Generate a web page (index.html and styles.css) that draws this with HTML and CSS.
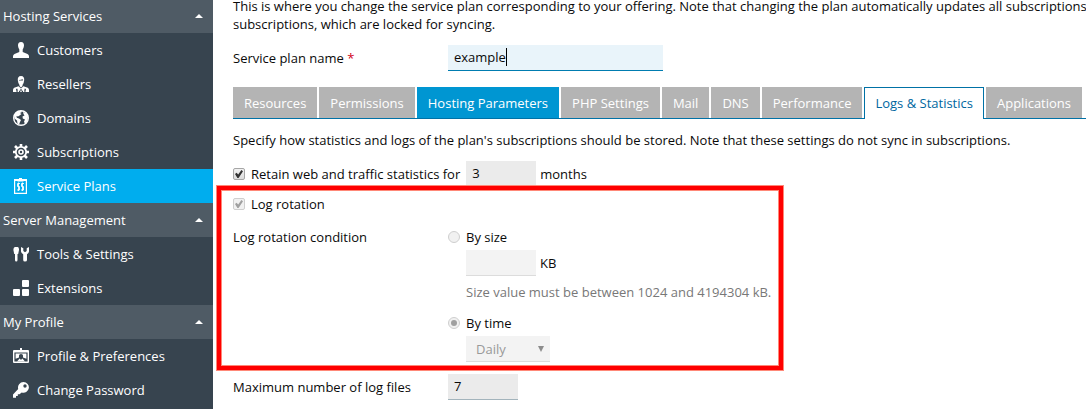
FILE: index.html
```html
<!DOCTYPE html>
<html lang="en">
<head>
    <meta charset="UTF-8">
    <meta name="viewport" content="width=device-width, initial-scale=1.0">
    <title>Service Plans</title>
    <link rel="stylesheet" href="styles.css">
</head>
<body>
    <nav class="sidebar">
        <button class="nav-header" type="button">Hosting Services</button>
        <a class="nav-item" href="#">
            <svg class="icon" viewBox="0 0 16 16"><path d="M8 0C5.800 0 4.900 1.600 5 3.600C5.100 5.600 5.900 6.900 6.300 7.500V10L1.500 12Q0 12.800 0 14.200V16H16V14.200Q16 12.800 14.500 12L9.700 10V7.500C10.100 6.900 10.900 5.600 11 3.600C11.100 1.600 10.200 0 8 0Z"/></svg>
            Customers
        </a>
        <a class="nav-item" href="#">
            <svg class="icon" viewBox="0 0 16 16"><path d="M8 0C5.500 0 4.600 1.700 4.800 4L5.400 7L6.500 9V10L8 11.500L9.500 10V9L10.600 7L11.200 4C11.400 1.700 10.500 0 8 0ZM6 4Q8.500 4 9.500 3L10 4.500H6Z" fill-rule="evenodd"/><path d="M5.600 10.300L1.200 11.800Q0 12.600 0 14V16H3.600L3 13L4.200 12.600L5 15H6.300L8 12.800L9.700 15H11L11.800 12.600L13 13L12.400 16H16V14Q16 12.600 14.800 11.800L10.400 10.300L8 12.600Z"/><path d="M4.600 14.500H6V16H4.600ZM10 14.500H11.400V16H10ZM7.300 14.500H8.700V16H7.300Z"/></svg>
            Resellers
        </a>
        <a class="nav-item" href="#">
            <svg class="icon" viewBox="0 0 16 16"><circle cx="8" cy="8" r="7.300" fill="none" stroke="currentColor" stroke-width="1.400"/><path d="M1 5L4 1.500L8 .7L9 2L7 3L8.500 4L6.500 5.500L5 6.500L3.500 6L3.800 7.800L6 8.500L8 10L7 12L6 14.800L4.500 13.500L4 10.500L1.500 8.500ZM10 2L13 3L15 6L14.500 11L12 14L11 11.500L12 9.500L9.800 8.500L9.500 6.500L11.500 5.500L10.500 4Z"/></svg>
            Domains
        </a>
        <a class="nav-item" href="#">
            <svg class="icon" viewBox="0 0 16 16"><g fill="none" stroke="currentColor"><circle cx="8" cy="8" r="5.200" stroke-width="1.800"/><circle cx="8" cy="8" r="2" stroke-width="1.600"/><path d="M8 0V3M8 13V16M0 8H3M13 8H16M2 2L4.500 4.500M11.500 11.500L14 14M2 14L4.500 11.500M11.500 4.500L14 2" stroke-width="2.600"/></g></svg>
            Subscriptions
        </a>
        <a class="nav-item active" href="#">
            <svg class="icon" viewBox="0 0 16 16"><path d="M1 1H14V16H1ZM2.200 3V14.800H12.800V3Z" fill-rule="evenodd"/><path d="M4.500 1H6V0H9V1H10.500V3.500H4.500Z"/><path d="M7 5.500H4.500V8.500H6.500V12H4M11 5.500H8.500V8.500H10.500V12H8M5.500 4.500V13M9.500 4.500V13" fill="none" stroke="currentColor" stroke-width=".9"/></svg>
            Service Plans
        </a>
        <button class="nav-header" type="button">Server Management</button>
        <a class="nav-item" href="#">
            <svg class="icon" viewBox="0 0 16 16"><path d="M1.800 1H4.700Q6.200 1.500 6 4L5.200 8H4.500V14Q4.500 15.500 3.200 15.500Q2 15.500 2 14V8H1.200L.4 4Q.3 1.500 1.800 1ZM8 1L10.300 2.300V5L12 6.200L13.700 5V2.300L16 1V5.500Q15.800 7 14 8.300V14Q14 15.500 12 15.500Q10.200 15.500 10.200 14V8.300Q8.200 7 8 5.500Z"/></svg>
            Tools &amp; Settings
        </a>
        <a class="nav-item" href="#">
            <svg class="icon" viewBox="0 0 16 16"><rect x="9" y="0" width="7" height="7" rx="1"/><rect x="0" y="9" width="7" height="7" rx="1"/><rect x="9" y="9" width="7" height="7" rx="1"/></svg>
            Extensions
        </a>
        <button class="nav-header" type="button">My Profile</button>
        <a class="nav-item" href="#">
            <svg class="icon" viewBox="0 0 16 16"><path d="M0 3Q0 2 1 2H15Q16 2 16 3V14Q16 15 15 15H1Q0 15 0 14ZM1.400 4.500V13.600H14.600V4.500Z" fill-rule="evenodd"/><path d="M5 2H7V0H9V2H11V4H5Z"/><path d="M2.600 5.500H13.400V10.800L10 9.500V7.500Q10 6 8 6Q6 6 6 7.500V9.500L2.600 10.800ZM4 13.500L6.600 10.500L8 12L9.400 10.500L12 13.500Z"/></svg>
            Profile &amp; Preferences
        </a>
        <a class="nav-item" href="#">
            <svg class="icon" viewBox="0 0 16 16"><path d="M10.500 0A5.500 5.500 0 0 0 5.200 7L0 12.500V15.800H3V14H4.800V12.200H6.500L8.700 10.500A5.400 5.400 0 1 0 10.500 0ZM12 2.300A1.700 1.700 0 1 1 12 5.700A1.700 1.700 0 0 1 12 2.300Z" fill-rule="evenodd"/></svg>
            Change Password
        </a>
    </nav>

    <main class="content">
        <p class="intro">This is where you change the service plan corresponding to your offering. Note that changing the plan automatically updates all subscriptions<br>subscriptions, which are locked for syncing.</p>

        <div class="form-row name-row">
            <label for="planName">Service plan name <span class="required">*</span></label>
            <div class="name-field">
                <input class="field focused" id="planName" type="text" value="example">
                <span class="caret"></span>
            </div>
        </div>

        <div class="tabs">
            <a class="tab" href="#">Resources</a>
            <a class="tab" href="#">Permissions</a>
            <a class="tab highlighted" href="#">Hosting Parameters</a>
            <a class="tab" href="#">PHP Settings</a>
            <a class="tab" href="#">Mail</a>
            <a class="tab" href="#">DNS</a>
            <a class="tab" href="#">Performance</a>
            <a class="tab current" href="#">Logs &amp; Statistics</a>
            <a class="tab" href="#">Applications</a>
        </div>

        <p class="hint-top">Specify how statistics and logs of the plan's subscriptions should be stored. Note that these settings do not sync in subscriptions.</p>

        <div class="option retain">
            <input class="check" id="retain" type="checkbox" checked>
            <label for="retain">Retain web and traffic statistics for</label>
            <div class="amount">
                <input class="field short" id="months" type="text" value="3">
                <label for="months">months</label>
            </div>
        </div>

        <div class="rotation">
            <div class="option">
                <input class="check" id="rotation" type="checkbox" checked disabled>
                <label for="rotation">Log rotation</label>
            </div>
            <div class="form-row condition">
                <span>Log rotation condition</span>
                <div>
                    <div class="choice">
                        <input class="radio" id="bySize" type="radio" name="condition" disabled>
                        <label for="bySize">By size</label>
                    </div>
                    <div class="choice-body amount">
                        <input class="field short" id="size" type="text" disabled>
                        <label for="size">KB</label>
                    </div>
                    <p class="note">Size value must be between 1024 and 4194304 kB.</p>
                    <div class="choice">
                        <input class="radio" id="byTime" type="radio" name="condition" checked disabled>
                        <label for="byTime">By time</label>
                    </div>
                    <div class="choice-body amount">
                        <div class="select-wrap">
                            <select class="field period" aria-label="Rotation period" disabled>
                                <option>Daily</option>
                            </select>
                        </div>
                    </div>
                </div>
            </div>
            <div class="marker"></div>
        </div>

        <div class="form-row max-files">
            <label for="maxFiles">Maximum number of log files</label>
            <input class="field short" id="maxFiles" type="text" value="7">
        </div>
    </main>
</body>
</html>
```
FILE: styles.css
```css
* {
    box-sizing: border-box;
}

body {
    margin: 0;
    display: flex;
    min-height: 100vh;
    overflow: hidden;
    font-family: "Open Sans", Arial, sans-serif;
    font-size: 13px;
    line-height: 18px;
    color: #0a0a0a;
    background-color: #fff;
}

p {
    margin: 0;
}

/* Sidebar */
.sidebar {
    flex: 0 0 213px;
    margin-top: -1px;
    background-color: #37444f;
}

.nav-header,
.nav-item {
    display: flex;
    align-items: center;
    width: 100%;
    height: 34px;
    color: #fff;
    text-decoration: none;
}

.nav-header {
    justify-content: space-between;
    padding: 0 10px 0 3px;
    border: none;
    font: inherit;
    background-color: #4f5b65;
    cursor: pointer;
}

.nav-header::after {
    content: "";
    border: 4px solid transparent;
    border-top: none;
    border-bottom-color: #fff;
}

.nav-item {
    gap: 8px;
    padding-left: 13px;
}

.nav-item.active {
    background-color: #00adee;
}

.icon {
    width: 16px;
    height: 16px;
    fill: currentColor;
}

/* Main area */
.content {
    flex: 1;
    min-width: 0;
    margin-top: -3px;
    padding-left: 20px;
}

.intro,
.hint-top {
    white-space: nowrap;
}

.form-row {
    display: grid;
    grid-template-columns: 215px 1fr;
    align-items: center;
}

.name-row {
    margin-top: 12px;
}

.required {
    color: #d10019;
}

.field {
    display: block;
    height: 26px;
    padding: 0 6px 1px;
    border: none;
    border-bottom: 1px solid #a3b4bc;
    border-radius: 0;
    outline: none;
    font: inherit;
    color: #0a0a0a;
    background-color: #ebebeb;
}

.field:disabled {
    border-bottom-color: #dcdcdc;
    color: #999;
    background-color: #f3f3f3;
    opacity: 1;
}

.field.focused {
    width: 215px;
    border-bottom-color: #007cb0;
    background-color: #e9f4fa;
}

.field.short {
    width: 70px;
}

.name-field {
    position: relative;
}

.caret {
    position: absolute;
    top: 3px;
    left: 58px;
    width: 1px;
    height: 18px;
    background-color: #000;
}

/* Tabs */
.tabs {
    display: flex;
    gap: 2px;
    margin-top: 16px;
    border-bottom: 1px solid #0071a6;
}

.tab {
    height: 31px;
    padding: 6px 10px;
    border: 1px solid #b4b4b4;
    border-bottom: none;
    color: #fff;
    text-decoration: none;
    white-space: nowrap;
    background-color: #b4b4b4;
}

.tab.highlighted {
    border-color: #0096d2;
    background-color: #0096d2;
}

.tab.current {
    height: 32px;
    margin-bottom: -1px;
    border-color: #0071a6;
    color: #0067a0;
    background-color: #fff;
}

.hint-top {
    margin-top: 12px;
}

/* Options */
.option,
.choice,
.amount {
    display: flex;
    align-items: center;
    gap: 6px;
}

.option.retain {
    margin: 12px 0 8px;
}

.amount {
    gap: 4px;
}

.choice-body {
    margin-top: 4px;
    padding-left: 18px;
}

.check,
.radio {
    appearance: none;
    display: grid;
    place-items: center;
    width: 12px;
    height: 12px;
    margin: 0;
    border: 1px solid #a6a6a6;
    background: linear-gradient(#f2f2f2, #dcdcdc);
}

.check {
    border-radius: 2px;
}

.check:checked::after {
    content: "";
    width: 8px;
    height: 8px;
    background-color: #333;
    clip-path: polygon(0 50%, 20% 35%, 40% 55%, 80% 0, 100% 15%, 45% 100%, 30% 100%);
}

.radio {
    border-radius: 50%;
}

.radio:checked::after {
    content: "";
    width: 6px;
    height: 6px;
    border-radius: 50%;
    background-color: #333;
}

.check:disabled,
.radio:disabled {
    border-color: #cfcfcf;
    background: #f1f1f1;
}

.check:disabled::after,
.radio:disabled::after {
    background-color: #a0a0a0;
}

.rotation {
    position: relative;
    width: fit-content;
}

.condition {
    align-items: start;
    margin-top: 15px;
}

.note {
    margin: 7px 0 13px;
    padding-left: 18px;
    color: #787878;
}

.select-wrap {
    position: relative;
}

.select-wrap::after {
    content: "";
    position: absolute;
    top: 10px;
    right: 6px;
    border: 3px solid transparent;
    border-top: 6px solid #8c8c8c;
    border-bottom: none;
}

.period {
    appearance: none;
    width: 84px;
    padding: 0 10px;
}

/* Red frame round the log rotation settings */
.marker {
    position: absolute;
    inset: -9px -12px -8px -16px;
    border: 4px solid #f00;
    box-shadow: 0 0 0 1px #ff8878, inset 0 0 0 1px #ff8878;
    pointer-events: none;
}

.max-files {
    margin-top: 12px;
}
```
